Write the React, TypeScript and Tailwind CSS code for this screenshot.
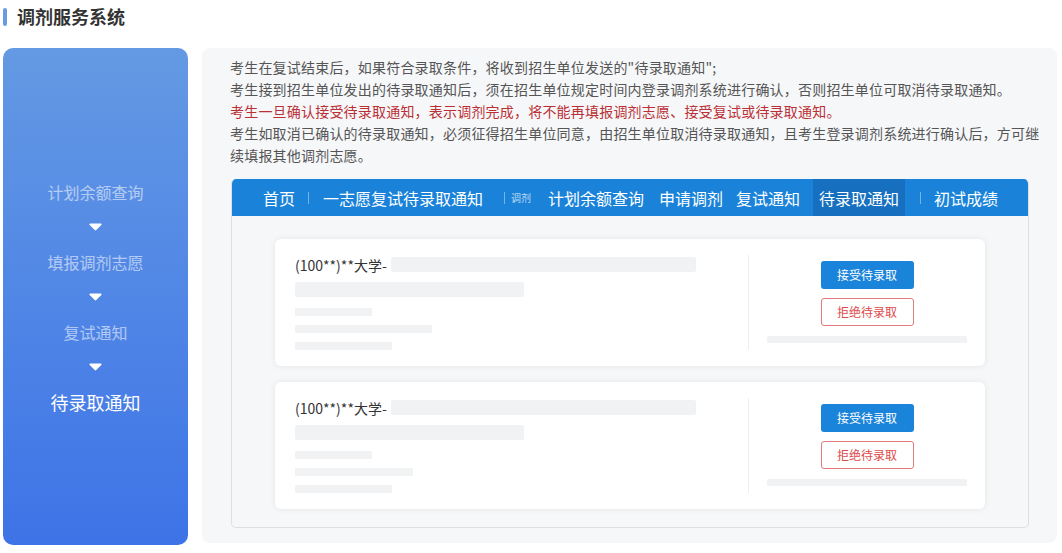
import React from 'react';

// Left step list
const steps = [
  { label: '计划余额查询', active: false },
  { label: '填报调剂志愿', active: false },
  { label: '复试通知', active: false },
  { label: '待录取通知', active: true },
];

function Caret() {
  return (
    <svg width="13" height="8" viewBox="0 0 13 8" className="block">
      <path d="M1.2 0.6 H11.8 C12.6 0.6 12.9 1.5 12.3 2.1 L7.3 7.1 C6.9 7.5 6.1 7.5 5.7 7.1 L0.7 2.1 C0.1 1.5 0.4 0.6 1.2 0.6 Z" fill="#ffffff" />
    </svg>
  );
}

interface CardProps {
  bars: number[];
}

// Placeholder (redacted) admission card
function OfferCard({ bars }: CardProps) {
  return (
    <div className="flex h-[127px] rounded-[6px] bg-white shadow-[0_0_6px_rgba(0,0,0,0.08)]">
      <div className="flex flex-1 flex-col pl-[20px] pt-[18px]">
        <div className="flex h-[15px] items-center">
          <span className="text-[14px] leading-none text-[#333]">(100**)**大学-</span>
          <div className="ml-[4px] h-[15px] w-[305px] rounded-[2px] bg-[#f1f2f4]" />
        </div>
        <div className="mt-[10px] h-[15px] w-[229px] rounded-[2px] bg-[#f1f2f4]" />
        <div className="mt-[11px] h-[8px] rounded-[1px] bg-[#f1f2f4]" style={{ width: bars[0] }} />
        <div className="mt-[9px] h-[8px] rounded-[1px] bg-[#f1f2f4]" style={{ width: bars[1] }} />
        <div className="mt-[9px] h-[8px] rounded-[1px] bg-[#f1f2f4]" style={{ width: bars[2] }} />
      </div>
      <div className="my-[16px] w-[237px] border-l border-[#eceef1] flex flex-col items-center pt-[6px]">
        <button className="h-[28px] w-[93px] rounded-[3px] bg-[#1a83da] text-[12px] text-white">接受待录取</button>
        <button className="mt-[9px] h-[28px] w-[93px] rounded-[3px] border border-[#e07b7b] bg-white text-[12px] text-[#dd4a4a]">拒绝待录取</button>
        <div className="mt-[10px] h-[7px] w-[200px] rounded-[1px] bg-[#f1f2f4]" />
      </div>
    </div>
  );
}

function NavSep({ className = '' }: { className?: string }) {
  return <span className={`h-[12px] w-px bg-white/40 ${className}`} />;
}

export default function App() {
  return (
    <div className="h-[553px] w-[1062px] bg-white font-['Noto_Sans_CJK_SC','Noto_Sans',sans-serif] overflow-hidden">
      {/* Title */}
      <div className="flex h-[34px] items-start pl-[3px] pt-[7px]">
        <span className="mt-px h-[18px] w-[4px] rounded-[2px] bg-[#6a9ae3]" />
        <h1 className="ml-[10px] text-[18px] font-bold leading-[19px] text-[#333]">调剂服务系统</h1>
      </div>

      <div className="mt-[14px] flex pl-[3px]">
        {/* Steps panel */}
        <div className="flex h-[497px] w-[185px] flex-col items-center justify-center rounded-[10px] bg-gradient-to-b from-[#6499e3] to-[#3e73e7]">
          {steps.map((s, i) => (
            <React.Fragment key={s.label}>
              {i > 0 && (
                <div className="flex h-[48px] items-center justify-center">
                  <Caret />
                </div>
              )}
              <div
                className={
                  s.active
                    ? 'text-[18px] leading-[22px] text-white'
                    : 'text-[16px] leading-[22px] text-white/55'
                }
              >
                {s.label}
              </div>
            </React.Fragment>
          ))}
        </div>

        {/* Main panel */}
        <div className="ml-[14px] h-[495px] w-[855px] rounded-[8px] bg-[#f6f7f9] pl-[28px] pt-[8px]">
          <div className="w-[815px] text-[14px] leading-[22px] tracking-[0.2px] text-[#555]">
            <p>考生在复试结束后，如果符合录取条件，将收到招生单位发送的"待录取通知";</p>
            <p>考生接到招生单位发出的待录取通知后，须在招生单位规定时间内登录调剂系统进行确认，否则招生单位可取消待录取通知。</p>
            <p className="text-[#bb3035]">考生一旦确认接受待录取通知，表示调剂完成，将不能再填报调剂志愿、接受复试或待录取通知。</p>
            <p>考生如取消已确认的待录取通知，必须征得招生单位同意，由招生单位取消待录取通知，且考生登录调剂系统进行确认后，方可继续填报其他调剂志愿。</p>
          </div>

          <div className="ml-px mt-[13px] w-[798px] overflow-hidden rounded-[5px] border border-t-0 border-[#dcdfe4] bg-[#f6f7f9]">
            <nav className="flex h-[37px] items-center bg-[#1a83d9] text-[16px] text-white">
              <span className="ml-[31px]">首页</span>
              <NavSep className="ml-[13px]" />
              <span className="ml-[14px]">一志愿复试待录取通知</span>
              <NavSep className="ml-[21px]" />
              <span className="ml-[6px] text-[10px] text-white/70">调剂</span>
              <span className="ml-[17px]">计划余额查询</span>
              <span className="ml-[15px]">申请调剂</span>
              <span className="ml-[13px]">复试通知</span>
              <span className="ml-[13px] flex h-full items-center bg-[#1670bf] px-[6px]">待录取通知</span>
              <NavSep className="ml-[15px]" />
              <span className="ml-[13px]">初试成绩</span>
            </nav>
            <div className="flex flex-col gap-[16px] px-[43px] pb-[18px] pt-[23px]">
              <OfferCard bars={[77, 137, 97]} />
              <OfferCard bars={[77, 118, 97]} />
            </div>
          </div>
        </div>
      </div>
    </div>
  );
}
